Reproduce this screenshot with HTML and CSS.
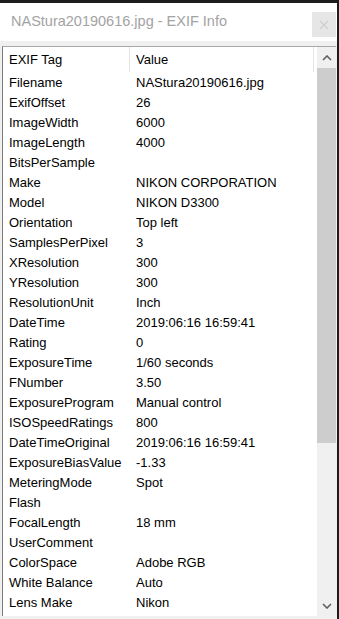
FILE: index.html
```html
<!DOCTYPE html>
<html lang="en">

<head>
  <meta charset="UTF-8">
  <meta name="viewport" content="width=device-width, initial-scale=1.0">
  <title>EXIF Info</title>
  <link rel="stylesheet" href="styles.css">
</head>

<body>

  <div class="window">
    <div class="title-bar">
      <span class="title">NAStura20190616.jpg - EXIF Info</span>
      <button class="close-button">
        <svg width="10" height="10" viewBox="0 0 10 10">
          <path d="M1 1 L9 9 M9 1 L1 9" stroke="#cfcfcf" stroke-width="1.1" fill="none" />
        </svg>
      </button>
    </div>

    <div class="client">
      <div class="list-view">
        <div class="list-body">
          <div class="list-header">
            <div class="header-cell">EXIF Tag</div>
            <div class="header-cell">Value</div>
          </div>

          <div class="list-row"><span>Filename</span><span>NAStura20190616.jpg</span></div>
          <div class="list-row"><span>ExifOffset</span><span>26</span></div>
          <div class="list-row"><span>ImageWidth</span><span>6000</span></div>
          <div class="list-row"><span>ImageLength</span><span>4000</span></div>
          <div class="list-row"><span>BitsPerSample</span><span></span></div>
          <div class="list-row"><span>Make</span><span>NIKON CORPORATION</span></div>
          <div class="list-row"><span>Model</span><span>NIKON D3300</span></div>
          <div class="list-row"><span>Orientation</span><span>Top left</span></div>
          <div class="list-row"><span>SamplesPerPixel</span><span>3</span></div>
          <div class="list-row"><span>XResolution</span><span>300</span></div>
          <div class="list-row"><span>YResolution</span><span>300</span></div>
          <div class="list-row"><span>ResolutionUnit</span><span>Inch</span></div>
          <div class="list-row"><span>DateTime</span><span>2019:06:16 16:59:41</span></div>
          <div class="list-row"><span>Rating</span><span>0</span></div>
          <div class="list-row"><span>ExposureTime</span><span>1/60 seconds</span></div>
          <div class="list-row"><span>FNumber</span><span>3.50</span></div>
          <div class="list-row"><span>ExposureProgram</span><span>Manual control</span></div>
          <div class="list-row"><span>ISOSpeedRatings</span><span>800</span></div>
          <div class="list-row"><span>DateTimeOriginal</span><span>2019:06:16 16:59:41</span></div>
          <div class="list-row"><span>ExposureBiasValue</span><span>-1.33</span></div>
          <div class="list-row"><span>MeteringMode</span><span>Spot</span></div>
          <div class="list-row"><span>Flash</span><span></span></div>
          <div class="list-row"><span>FocalLength</span><span>18 mm</span></div>
          <div class="list-row"><span>UserComment</span><span></span></div>
          <div class="list-row"><span>ColorSpace</span><span>Adobe RGB</span></div>
          <div class="list-row"><span>White Balance</span><span>Auto</span></div>
          <div class="list-row"><span>Lens Make</span><span>Nikon</span></div>
        </div>

        <!-- vertical scrollbar -->
        <div class="scrollbar">
          <div class="scroll-arrow">
            <svg width="10" height="6" viewBox="0 0 10 6">
              <path d="M1 5 L5 1 L9 5" stroke="#606060" stroke-width="1.6" fill="none" />
            </svg>
          </div>
          <div class="scroll-track">
            <div class="scroll-thumb"></div>
          </div>
          <div class="scroll-arrow">
            <svg width="10" height="6" viewBox="0 0 10 6">
              <path d="M1 1 L5 5 L9 1" stroke="#606060" stroke-width="1.6" fill="none" />
            </svg>
          </div>
        </div>
      </div>
    </div>
  </div>

</body>

</html>
```

FILE: styles.css
```css
body {
  margin: 0;
  padding: 0;
  background-color: #1b1c1e;
  font-family: 'Liberation Sans', Arial, sans-serif;
  overflow: hidden;
}

.window {
  width: 337px;
  height: 616px;
  margin-top: 3px;
  display: flex;
  flex-direction: column;
  background-color: #f0f0f0;
}

.title-bar {
  height: 38px;
  display: flex;
  align-items: flex-start;
  justify-content: space-between;
  background-color: #ffffff;
}

.title {
  margin-left: 11px;
  margin-top: 10px;
  font-size: 14.5px;
  color: #a3a3a3;
  white-space: nowrap;
}

.close-button {
  width: 24px;
  height: 25px;
  margin-top: 9px;
  margin-right: 1px;
  padding: 0;
  border: none;
  background-color: #e6e6e6;
  display: flex;
  align-items: center;
  justify-content: center;
}

.client {
  flex: 1;
  min-height: 0;
  padding: 5px 1px 3px 2px;
  display: flex;
}

.list-view {
  flex: 1;
  min-height: 0;
  display: flex;
  background-color: #ffffff;
  border-left: 1px solid #7a7a7a;
  border-top: 1px solid #a8a8a8;
}

.list-body {
  flex: 1;
  min-width: 0;
  overflow: hidden;
  font-size: 13px;
  color: #000000;
}

.list-header {
  height: 25px;
  display: grid;
  grid-template-columns: 127px 184px;
}

.header-cell {
  padding: 1px 0 0 6px;
  line-height: 24px;
  border-right: 1px solid #e5e5e5;
}

.list-row {
  height: 20px;
  display: grid;
  grid-template-columns: 127px 184px;
  line-height: 20px;
  white-space: nowrap;
}

.list-row span {
  padding: 1px 0 0 6px;
  overflow: hidden;
}

.scrollbar {
  width: 19px;
  display: flex;
  flex-direction: column;
  background-color: #f0f0f0;
}

.scroll-arrow {
  height: 21px;
  display: flex;
  align-items: center;
  justify-content: center;
}

.scroll-track {
  flex: 1;
}

.scroll-thumb {
  height: 375px;
  background-color: #cdcdcd;
}
```
